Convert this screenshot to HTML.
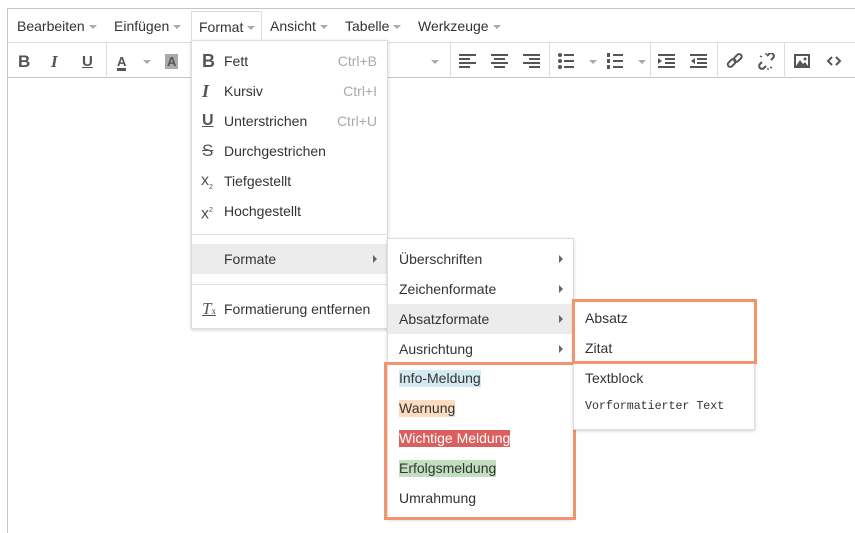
<!DOCTYPE html>
<html><head><meta charset="utf-8"><style>
*{box-sizing:border-box;margin:0;padding:0}
html,body{width:855px;height:533px;overflow:hidden}
body{background:#fff;position:relative;font-family:"Liberation Sans",Arial,sans-serif;font-size:14px;color:#333}
.a{position:absolute}
.frame{left:7px;top:8px;width:860px;height:525px;border:1px solid #c5c5c5;border-bottom:none}
.mb{left:8px;top:9px;width:850px;height:33px}
.mi{position:absolute;top:9px;height:17px;line-height:17px;color:#333}
.car{display:inline-block;width:0;height:0;border-left:4px solid transparent;border-right:4px solid transparent;border-top:4px solid #aaa;vertical-align:middle;margin-left:4px}
.tb{left:8px;top:42px;width:850px;height:36px;border-top:1px solid #ddd;border-bottom:1px solid #c5c5c5}
.sep{position:absolute;top:43px;width:1px;height:35px;background:#ddd}
.ic{position:absolute;top:52px;font-weight:bold;color:#555;font-size:17px}
.menu{background:#fff;border:1px solid #ddd;box-shadow:0 1px 3px rgba(0,0,0,.2)}
.it{position:absolute;left:0;right:0;height:30px;line-height:30px}
.hl{background:#ececec}
.arr{position:absolute;right:10px;top:11px;width:0;height:0;border-top:4px solid transparent;border-bottom:4px solid transparent;border-left:4px solid #666}
.sc{position:absolute;right:10px;color:#aaa}
.ob{position:absolute;border:3px solid #f4946f}
.hr{position:absolute;left:0;right:0;height:1px;background:#ddd}
</style></head><body>
<div class="a frame"></div>
<div class="a mb">
<span class="mi" style="left:9px">Bearbeiten<span class="car"></span></span>
<span class="mi" style="left:106px">Einfügen<span class="car"></span></span>
<span class="mi" style="left:262px">Ansicht<span class="car"></span></span>
<span class="mi" style="left:337px">Tabelle<span class="car"></span></span>
<span class="mi" style="left:410px">Werkzeuge<span class="car"></span></span>
</div>
<div class="a" style="left:191px;top:11px;width:71px;height:30px;border:1px solid #ddd;border-bottom:none;background:#fff;padding:8px 0 0 7px;line-height:15px">Format<span class="car"></span></div>
<div class="a tb"></div>
<div class="sep" style="left:106px"></div><div class="sep" style="left:450px"></div><div class="sep" style="left:549px"></div><div class="sep" style="left:650px"></div><div class="sep" style="left:717px"></div><div class="sep" style="left:784px"></div>
<span class="ic" style="left:18px;top:52px">B</span>
<span class="ic" style="left:51px;font-family:'Liberation Serif',serif;font-style:italic">I</span>
<span class="ic" style="left:82px;text-decoration:underline;font-size:15px;top:53px">U</span>
<span class="ic" style="left:117px;font-size:13px;border-bottom:3px solid #555;line-height:13px;top:55px">A</span>
<span class="car" style="position:absolute;left:139px;top:60px"></span>
<span class="ic" style="left:165px;font-size:13px;background:#aaa;padding:0 2px;line-height:15px;top:54px">A</span>
<span class="car" style="position:absolute;left:427px;top:60px"></span>
<svg class="a" style="left:458px;top:53px" width="390" height="18" fill="#555">
<g><rect x="1" y="1" width="17" height="2"/><rect x="1" y="5" width="11" height="2"/><rect x="1" y="9" width="17" height="2"/><rect x="1" y="13" width="11" height="2"/></g>
<g transform="translate(32,0)"><rect x="1" y="1" width="17" height="2"/><rect x="4" y="5" width="11" height="2"/><rect x="1" y="9" width="17" height="2"/><rect x="4" y="13" width="11" height="2"/></g>
<g transform="translate(64,0)"><rect x="1" y="1" width="17" height="2"/><rect x="7" y="5" width="11" height="2"/><rect x="1" y="9" width="17" height="2"/><rect x="7" y="13" width="11" height="2"/></g>
<g transform="translate(100,0)"><circle cx="2" cy="2" r="2"/><circle cx="2" cy="8" r="2"/><circle cx="2" cy="14" r="2"/><rect x="6" y="1" width="10" height="2"/><rect x="6" y="7" width="10" height="2"/><rect x="6" y="13" width="10" height="2"/></g>
<g transform="translate(149,0)"><rect x="0" y="0" width="3" height="4"/><rect x="0" y="6" width="3" height="4"/><rect x="0" y="12" width="3" height="4"/><rect x="6" y="1" width="10" height="2"/><rect x="6" y="7" width="10" height="2"/><rect x="6" y="13" width="10" height="2"/></g>
<g transform="translate(200,0)"><rect x="0" y="1" width="17" height="2"/><rect x="7" y="5" width="10" height="2"/><rect x="7" y="9" width="10" height="2"/><rect x="0" y="13" width="17" height="2"/><path d="M0 5l4 3-4 3z"/></g>
<g transform="translate(232,0)"><rect x="0" y="1" width="17" height="2"/><rect x="7" y="5" width="10" height="2"/><rect x="7" y="9" width="10" height="2"/><rect x="0" y="13" width="17" height="2"/><path d="M5 5l-4 3 4 3z"/></g>
<g transform="translate(268,0)" fill="none" stroke="#555" stroke-width="2"><rect x="1" y="8" width="9" height="5" rx="2.5" transform="rotate(-45 5 10)"/><rect x="7" y="3" width="9" height="5" rx="2.5" transform="rotate(-45 11 5)"/></g>
<g transform="translate(300,0)" fill="none" stroke="#555" stroke-width="2"><path d="M4 9l-2 2a2 2 0 0 0 4 4l2-2M13 7l2-2a2 2 0 0 0-4-4l-2 2"/><path d="M2 3l2 1M8 0v2M14 15l-2-1M10 17v-2" stroke-width="1.3"/></g>
<g transform="translate(336,0)"><rect x="0" y="1" width="16" height="14"/><rect x="2" y="3" width="12" height="10" fill="#fff"/><path d="M2 13l4-6 3 4 2-2 3 4z"/><circle cx="11" cy="6" r="1.5"/></g>
<g transform="translate(369,0)" fill="none" stroke="#555" stroke-width="2"><path d="M5 4l-4 4 4 4M9 4l4 4-4 4"/></g>
</svg>
<span class="car" style="position:absolute;left:585px;top:60px"></span>
<span class="car" style="position:absolute;left:634px;top:60px"></span>

<div class="a menu" style="left:191px;top:40px;width:197px;height:289px">
<div class="it" style="top:5px"><b style="position:absolute;left:10px;font-size:18px;color:#555">B</b><span style="position:absolute;left:32px">Fett</span><span class="sc">Ctrl+B</span></div>
<div class="it" style="top:35px"><b style="position:absolute;left:10px;font-size:18px;color:#555;font-family:'Liberation Serif',serif;font-style:italic">I</b><span style="position:absolute;left:32px">Kursiv</span><span class="sc">Ctrl+I</span></div>
<div class="it" style="top:65px"><b style="position:absolute;left:10px;font-size:16px;color:#555;text-decoration:underline">U</b><span style="position:absolute;left:32px">Unterstrichen</span><span class="sc">Ctrl+U</span></div>
<div class="it" style="top:95px"><span style="position:absolute;left:10px;font-size:17px;color:#555;text-decoration:line-through">S</span><span style="position:absolute;left:32px">Durchgestrichen</span></div>
<div class="it" style="top:125px"><span style="position:absolute;left:9px;color:#555;font-size:16px">x<sub style="font-size:7px">2</sub></span><span style="position:absolute;left:32px">Tiefgestellt</span></div>
<div class="it" style="top:155px"><span style="position:absolute;left:9px;color:#555;font-size:16px">x<sup style="font-size:7px">2</sup></span><span style="position:absolute;left:32px">Hochgestellt</span></div>
<div class="hr" style="top:193px"></div>
<div class="it hl" style="top:203px"><span style="position:absolute;left:32px">Formate</span><span class="arr"></span></div>
<div class="hr" style="top:243px"></div>
<div class="it" style="top:253px"><i style="position:absolute;left:10px;font-family:'Liberation Serif',serif;font-size:17px;color:#555;text-decoration:underline">T<span style="font-size:9px;font-style:normal">x</span></i><span style="position:absolute;left:32px">Formatierung entfernen</span></div>
</div>

<div class="a menu" style="left:387px;top:238px;width:187px;height:281px">
<div class="it" style="top:5px"><span style="position:absolute;left:11px">Überschriften</span><span class="arr"></span></div>
<div class="it" style="top:35px"><span style="position:absolute;left:11px">Zeichenformate</span><span class="arr"></span></div>
<div class="it hl" style="top:65px"><span style="position:absolute;left:11px">Absatzformate</span><span class="arr"></span></div>
<div class="it" style="top:95px"><span style="position:absolute;left:11px">Ausrichtung</span><span class="arr"></span></div>
<div class="it" style="top:125px"><span style="position:absolute;left:11px;background:#d5e9f3;line-height:17px;top:6px">Info-Meldung</span></div>
<div class="it" style="top:155px"><span style="position:absolute;left:11px;background:#fbdcc0;line-height:17px;top:6px">Warnung</span></div>
<div class="it" style="top:185px"><span style="position:absolute;left:11px;background:#d9605f;color:#fff;line-height:17px;top:6px">Wichtige Meldung</span></div>
<div class="it" style="top:215px"><span style="position:absolute;left:11px;background:#c2dfbf;line-height:17px;top:6px">Erfolgsmeldung</span></div>
<div class="it" style="top:244px"><span style="position:absolute;left:11px">Umrahmung</span></div>
</div>
<div class="ob" style="left:384px;top:362px;width:192px;height:158px"></div>

<div class="a menu" style="left:573px;top:300px;width:182px;height:130px">
<div class="it" style="top:2px"><span style="position:absolute;left:11px">Absatz</span></div>
<div class="it" style="top:32px"><span style="position:absolute;left:11px">Zitat</span></div>
<div class="it" style="top:62px"><span style="position:absolute;left:11px">Textblock</span></div>
<div class="it" style="top:91px"><span style="position:absolute;left:11px;font-family:'Liberation Mono',monospace;font-size:11.6px">Vorformatierter Text</span></div>
</div>
<div class="ob" style="left:572px;top:299px;width:185px;height:65px"></div>
</body></html>
